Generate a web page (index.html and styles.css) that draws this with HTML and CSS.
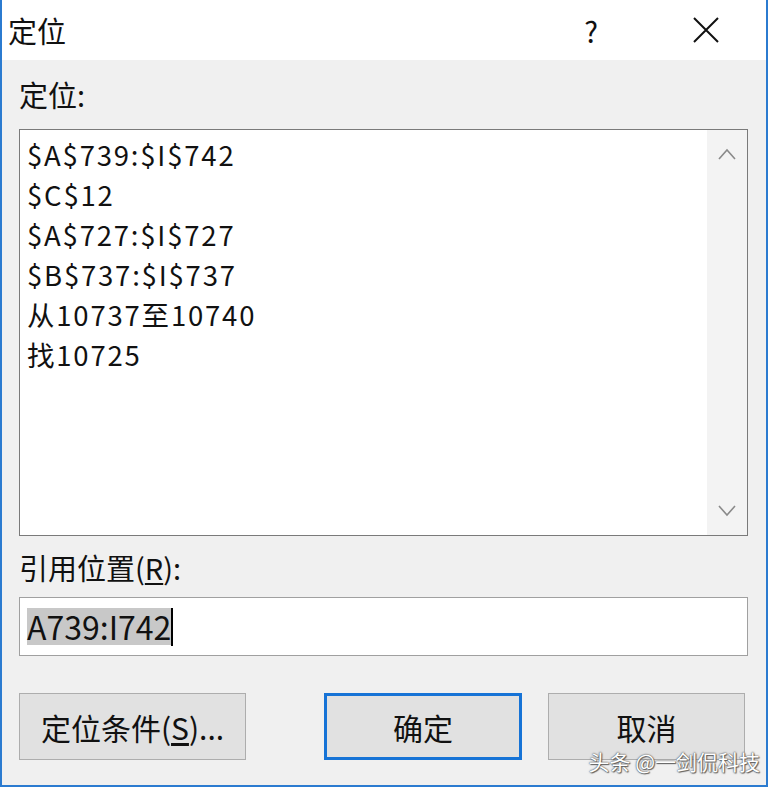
FILE: index.html
```html
<!DOCTYPE html>
<html lang="zh-CN">
<head>
  <meta charset="UTF-8" />
  <title>定位</title>
  <link rel="stylesheet" href="styles.css">
</head>
<body>

  <!-- Boîte de dialogue Go To -->
  <div class="dialog">
    <div class="title-bar">
      <span class="title">定位</span>
      <span class="help">?</span>
      <svg class="close" width="28" height="28" viewBox="0 0 28 28">
        <path d="M2 2 L26 26 M26 2 L2 26" stroke="#111" stroke-width="2" fill="none" />
      </svg>
    </div>

    <div class="dialog-body">
      <div class="label">定位:</div>
      <div class="listbox">
        <ul class="items">
          <li>$A$739:$I$742</li>
          <li>$C$12</li>
          <li>$A$727:$I$727</li>
          <li>$B$737:$I$737</li>
          <li>从10737至10740</li>
          <li>找10725</li>
        </ul>
        <div class="scrollbar">
          <svg width="20" height="12" viewBox="0 0 20 12">
            <path d="M2 11 L10 2 L18 11" stroke="#8a8a8a" stroke-width="1.6" fill="none" />
          </svg>
          <svg width="20" height="12" viewBox="0 0 20 12">
            <path d="M2 1 L10 10 L18 1" stroke="#8a8a8a" stroke-width="1.6" fill="none" />
          </svg>
        </div>
      </div>

      <div class="label ref-label">引用位置(<u>R</u>):</div>
      <div class="ref-input"><span class="selected">A739:I742</span><span class="caret"></span></div>

      <div class="buttons">
        <button class="btn btn-wide">定位条件(<u>S</u>)...</button>
        <button class="btn btn-default">确定</button>
        <button class="btn btn-last">取消</button>
      </div>
    </div>

    <div class="watermark">头条 @一剑侃科技</div>
  </div>

</body>
</html>
```

FILE: styles.css
```css
body {
  margin: 0;
  padding: 0;
  background: #ffffff;
  font-family: "Noto Sans CJK SC", "Noto Sans", sans-serif;
  color: #111111;
}

.dialog {
  position: relative;
  width: 764px;
  height: 785px;
  border-left: 2px solid #2b7bd0;
  border-right: 2px solid #2b7bd0;
  border-bottom: 2px solid #2b7bd0;
  background: #f0f0f0;
}

.title-bar {
  height: 60px;
  background: #ffffff;
  display: flex;
  align-items: center;
}

.title {
  font-size: 29px;
  margin-left: 6px;
  flex: 1;
}

.help {
  font-size: 29px;
  margin-right: 94px;
}

.close {
  margin-right: 46px;
}

.dialog-body {
  padding: 18px 18px 0 17px;
}

.label {
  font-size: 29px;
  line-height: 32px;
  margin-bottom: 19px;
}

.listbox {
  display: flex;
  height: 405px;
  border: 1px solid #7a7a7a;
  background: #ffffff;
}

.items {
  list-style: none;
  margin: 0;
  padding: 4px 0 0 7px;
  flex: 1;
  font-size: 27.5px;
  letter-spacing: 1.8px;
  line-height: 40px;
}

.scrollbar {
  width: 40px;
  background: #f3f3f3;
  display: flex;
  flex-direction: column;
  justify-content: space-between;
  align-items: center;
  padding: 18px 0 18px;
}

.ref-label {
  margin-top: 15px;
  margin-bottom: 14px;
}

.ref-label u {
  text-underline-offset: 3px;
}

.ref-input {
  height: 57px;
  border: 1px solid #a0a0a0;
  background: #ffffff;
  display: flex;
  align-items: center;
  padding-left: 7px;
  font-size: 32px;
}

.selected {
  background: #c8c8c8;
  line-height: 37px;
}

.caret {
  width: 2px;
  height: 38px;
  background: #000000;
}

.buttons {
  display: flex;
  margin-top: 37px;
}

.btn {
  height: 67px;
  width: 198px;
  background: #e1e1e1;
  border: 1px solid #adadad;
  font-family: "Noto Sans CJK SC", "Noto Sans", sans-serif;
  font-size: 30px;
  color: #111111;
  padding: 0;
}

.btn-wide {
  width: 227px;
  margin-right: 78px;
}

.btn-default {
  width: 198px;
  border: 3px solid #1673d6;
  margin-right: 26px;
}

.btn-last {
  width: 197px;
}

.btn u {
  text-underline-offset: 3px;
}

.watermark {
  position: absolute;
  right: 6px;
  bottom: 10px;
  font-size: 21px;
  line-height: 28px;
  color: #ffffff;
  text-shadow: 0 0 1px #555, 0 0 2px #555, 1px 1px 1px #666;
}
```
